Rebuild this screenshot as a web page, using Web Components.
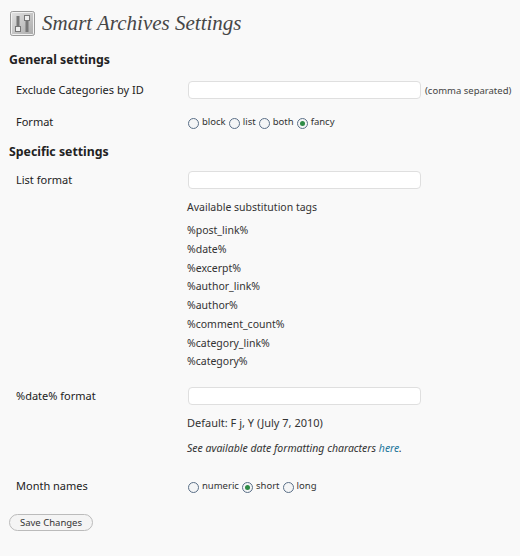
<!DOCTYPE html>
<html>
<head>
<meta charset="utf-8">
<style>
html, body { margin: 0; background: #f9f9f9; }
body { font: 11px "Noto Sans", "DejaVu Sans", sans-serif; color: #333; }
a { color: #21759b; text-decoration: none; }
</style>
</head>
<body>
<settings-page>
  <page-title>Smart Archives Settings</page-title>

  <section-title style="--top: 15px">General settings</section-title>
  <setting-row label="Exclude Categories by ID" style="--top: 12px">
    <text-field></text-field><small-note>(comma separated)</small-note>
  </setting-row>
  <setting-row label="Format" style="--top: 13px">
    <radio-item>block</radio-item>
    <radio-item>list</radio-item>
    <radio-item>both</radio-item>
    <radio-item checked>fancy</radio-item>
  </setting-row>

  <section-title style="--top: 12px">Specific settings</section-title>
  <setting-row label="List format" style="--top: 10px">
    <text-field></text-field>
    <help-text style="--top: 9px">Available substitution tags</help-text>
    <tag-list style="--top: 5px">
      <span>%post_link%</span>
      <span>%date%</span>
      <span>%excerpt%</span>
      <span>%author_link%</span>
      <span>%author%</span>
      <span>%comment_count%</span>
      <span>%category_link%</span>
      <span>%category%</span>
    </tag-list>
  </setting-row>
  <setting-row label="%date% format" style="--top: 16px">
    <text-field></text-field>
    <help-text style="--top: 9px; font-size: 11px">Default: F j, Y (July 7, 2010)</help-text>
    <help-text style="--top: 7px"><i>See available date formatting characters <a href="#">here</a>.</i></help-text>
  </setting-row>
  <setting-row label="Month names" style="--top: 20px">
    <radio-item>numeric</radio-item>
    <radio-item checked>short</radio-item>
    <radio-item>long</radio-item>
  </setting-row>

  <save-button>Save Changes</save-button>
</settings-page>

<script>
function define(name, css, html) {
    customElements.define(name, class extends HTMLElement {
        constructor() {
            super();
            this.attachShadow({ mode: "open" }).innerHTML = `<style>${css}</style>${html}`;
        }
    });
}

define("settings-page", `
    :host { display: block; padding: 0 9px; height: 556px; box-sizing: border-box; overflow: hidden; }
`, `<slot></slot>`);

define("page-title", `
    :host { display: flex; align-items: center; gap: 7px; height: 26px; padding: 10px 0 0 1px;
            font: italic 21px "Liberation Serif", serif; color: #464646; }
    svg { flex: none; }
`, `<svg width="25" height="25" viewBox="0 0 25 25">
    <defs><linearGradient id="g" x1="0" y1="0" x2="1" y2="1">
      <stop offset="0" stop-color="#e4e4e4"/><stop offset="1" stop-color="#a8a8a8"/>
    </linearGradient></defs>
    <rect x=".5" y=".5" width="24" height="24" rx="2" fill="url(#g)" stroke="#999"/>
    <rect x="1.5" y="1.5" width="22" height="22" rx="1" fill="none" stroke="#f2f2f2"/>
    <rect x="6.5" y="5" width="3" height="11" fill="#777"/>
    <rect x="5.5" y="15.5" width="5" height="5" fill="#eee" stroke="#777"/>
    <rect x="15.5" y="9" width="3" height="12" fill="#777"/>
    <rect x="14.5" y="4.5" width="5" height="5" fill="#eee" stroke="#777"/>
  </svg><slot></slot>`);

define("section-title", `
    :host { display: block; margin-top: var(--top, 0); font-size: 12.3px; font-weight: 700; line-height: 18px; color: #222; }
`, `<slot></slot>`);

customElements.define("setting-row", class extends HTMLElement {
    constructor() {
        super();
        this.attachShadow({ mode: "open" }).innerHTML = `<style>
            :host { display: grid; grid-template-columns: 172px 1fr; margin: var(--top, 0) 0 0 7px; line-height: 18px; }
            .label { color: #222; }
            .value { white-space: nowrap; }
        </style><div class="label"></div><div class="value"><slot></slot></div>`;
    }
    connectedCallback() {
        this.shadowRoot.querySelector(".label").textContent = this.getAttribute("label");
    }
});

define("text-field", `
    :host { display: inline-block; width: 233px; height: 18px; box-sizing: border-box; vertical-align: top;
            background: #fff; border: 1px solid #dfdfdf; border-radius: 4px; }
`, ``);

define("small-note", `
    :host { font-size: 9.5px; margin-left: 4px; color: #444; }
`, `<slot></slot>`);

define("help-text", `
    :host { display: block; margin: var(--top, 0) 0 0 -1px; color: #333; font-size: 10.5px; }
`, `<slot></slot>`);

define("tag-list", `
    :host { display: flex; flex-direction: column; margin: var(--top, 0) 0 0 -1px; color: #333; font-size: 10.5px; line-height: 18.75px; }
`, `<slot></slot>`);

customElements.define("radio-item", class extends HTMLElement {
    constructor() {
        super();
        this.attachShadow({ mode: "open" }).innerHTML = `<style>
            :host { display: inline-flex; align-items: center; gap: 3px; height: 18px; margin-right: .2px; vertical-align: top; font-size: 9.5px; color: #333; }
            .dot { width: 11px; height: 11px; box-sizing: border-box; border: 1px solid #5a6f87; border-radius: 50%;
                   background: #f4f5f6; display: flex; align-items: center; justify-content: center; margin-top: 2px; }
            .dot i { width: 5px; height: 5px; border-radius: 50%; background: #2e8b46; display: none; }
            :host([checked]) .dot i { display: block; }
        </style><span class="dot"><i></i></span><slot></slot>`;
    }
});

define("save-button", `
    :host { display: inline-block; margin-top: 19px; height: 17px; line-height: 15px; box-sizing: border-box; padding: 0 10px;
            background: #f4f4f4; border: 1px solid #bbb; border-radius: 9px; color: #333; font-size: 9.5px; }
`, `<slot></slot>`);
</script>
</body>
</html>
